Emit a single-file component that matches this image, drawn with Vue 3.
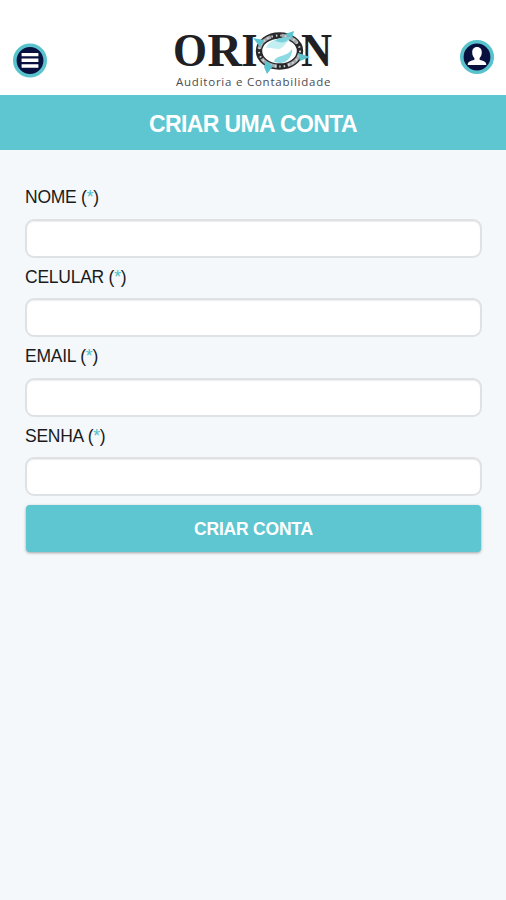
<template>
    <div class="page">
        <header class="topbar">
            <button class="round menu" aria-label="Menu">
                <svg viewBox="0 0 36 36" width="36" height="36">
                    <circle cx="18" cy="17.5" r="15.2" fill="#07103f" stroke="#58c2cd" stroke-width="3.6" />
                    <path d="M9.6 11.6h16.800M9.6 17.300h16.800M9.6 23h16.800" fill="none" stroke="#fff" stroke-width="3.400" />
                </svg>
            </button>
            <svg class="logo" viewBox="0 0 170 75" width="170" height="75">
                <g class="brand">
                    <text x="5" y="48" textLength="34" lengthAdjust="spacingAndGlyphs">O</text>
                    <text x="39.5" y="48" textLength="34.5" lengthAdjust="spacingAndGlyphs">R</text>
                    <text x="73.5" y="48" textLength="16" lengthAdjust="spacingAndGlyphs">I</text>
                    <text x="133" y="48" textLength="31" lengthAdjust="spacingAndGlyphs">N</text>
                </g>
                <ellipse cx="111.500" cy="33" rx="20.500" ry="15.500" fill="#fff" stroke="#28282b" stroke-width="6.400" />
                <ellipse cx="111.500" cy="33" rx="20.500" ry="15.500" fill="none" stroke="#a3a7aa" stroke-width="3.600" stroke-dasharray="17 11" stroke-dashoffset="-3" />
                <ellipse cx="111.500" cy="33" rx="20.500" ry="15.500" fill="none" stroke="#d4d7d9" stroke-width="2" stroke-dasharray="1.5 3" />
                <path d="M98 30c3-7 10-10 20-10l4 2c-5 3-6 8-11 9-5 0-8-2-13-1z" fill="#c3eef2" />
                <path d="M107 23c3-3 8-4 12-4l4 1-6 4c-4 1-6 0-10-1z" fill="#78d1db" />
                <path d="M106 44c1-5 5-5 10-7 4-1 6-3 8-6 1 8-6 14-12 14z" fill="#8edae2" />
                <path d="M85 20l11 2-4 7zM117 16l9-3-2 8zM130 35l12 4-10 4zM98 43l7 5-6 8-3-7z" fill="#5bc4cf" />
                <text class="tagline" x="8" y="68" textLength="154.5">Auditoria e Contabilidade</text>
            </svg>
            <button class="round user" aria-label="Conta">
                <svg viewBox="0 0 36 36" width="36" height="36">
                    <circle cx="18" cy="18" r="15.2" fill="#07103f" stroke="#58c2cd" stroke-width="3.6" />
                    <path d="M18 8c-3.300 0-4.800 2.300-4.800 5.200 0 2.800 1 4.600 2.200 5.900v1.700c-3.500 1.100-6.700 1.500-6.700 5.200h18.600c0-3.700-3.200-4.100-6.700-5.200v-1.700c1.200-1.300 2.200-3.100 2.200-5.900 0-2.900-1.500-5.200-4.800-5.200z" fill="#fff" />
                </svg>
            </button>
        </header>

        <h1 class="title">CRIAR UMA CONTA</h1>

        <form class="form" @submit.prevent>
            <div v-for="field in fields" :key="field.name" class="field">
                <label :for="field.name">{{ field.label }} (<span>*</span>)</label>
                <input :id="field.name" v-model="form[field.name]" :type="field.type" />
            </div>
            <button class="submit" type="submit">CRIAR CONTA</button>
        </form>
    </div>
</template>

<script setup>
import { reactive } from 'vue';

const fields = [
    { name: "nome", label: "NOME", type: "text" },
    { name: "celular", label: "CELULAR", type: "tel" },
    { name: "email", label: "EMAIL", type: "email" },
    { name: "senha", label: "SENHA", type: "password" },
];

const form = reactive({ nome: "", celular: "", email: "", senha: "" });
</script>

<style>
body {
    background: #f4f8fa;
}
</style>

<style scoped>
.page {
    min-height: 100vh;
    background: #f4f8fa;
    color: #1b1b1d;
    font-family: "Liberation Sans", Arial, sans-serif;
}

.topbar {
    display: flex;
    align-items: flex-start;
    justify-content: space-between;
    box-sizing: border-box;
    height: 95px;
    padding: 0 11px 0 12px;
    background: #fff;
}

.round {
    width: 36px;
    height: 36px;
    padding: 0;
    border: 0;
    background: none;
}

.round svg {
    display: block;
}

.menu {
    margin-top: 43px;
}

.user {
    margin-top: 39px;
}

.logo {
    margin: 18px 1px 0 0;
    overflow: visible;
}

.brand {
    fill: #202024;
    font-family: "Liberation Serif", serif;
    font-size: 47px;
    font-weight: 700;
}

.tagline {
    fill: #4a4b4f;
    font-family: "Open Sans", sans-serif;
    font-size: 11.5px;
}

.title {
    height: 55px;
    margin: 0;
    background: #5dc6d1;
    color: #fff;
    font-size: 23px;
    font-weight: 700;
    letter-spacing: -0.6px;
    line-height: 58px;
    text-align: center;
}

.form {
    padding: 36px 24px 0 25px;
}

.field {
    height: 79.5px;
}

.field label {
    display: block;
    height: 32.6px;
    font-size: 17.5px;
    letter-spacing: -0.25px;
    line-height: 22px;
}

.field label span {
    color: #4dbfcb;
}

.field input {
    display: block;
    box-sizing: border-box;
    width: 100%;
    height: 39px;
    padding: 0 10px;
    border: 2px solid #dfe2e4;
    border-radius: 9px;
    outline: none;
    background: #fff;
    box-shadow: inset 0 1px 1px #00000012;
    font-size: 17px;
}

.submit {
    display: block;
    width: 455px;
    height: 47px;
    margin: 1px 0 0 1px;
    padding: 1px 0 0;
    border: 0;
    border-radius: 4px;
    background: #5dc6d1;
    box-shadow: 0 1px 3px #00000059;
    color: #fff;
    font-family: inherit;
    font-size: 17.5px;
    font-weight: 700;
    letter-spacing: -0.2px;
    line-height: 46px;
}
</style>
